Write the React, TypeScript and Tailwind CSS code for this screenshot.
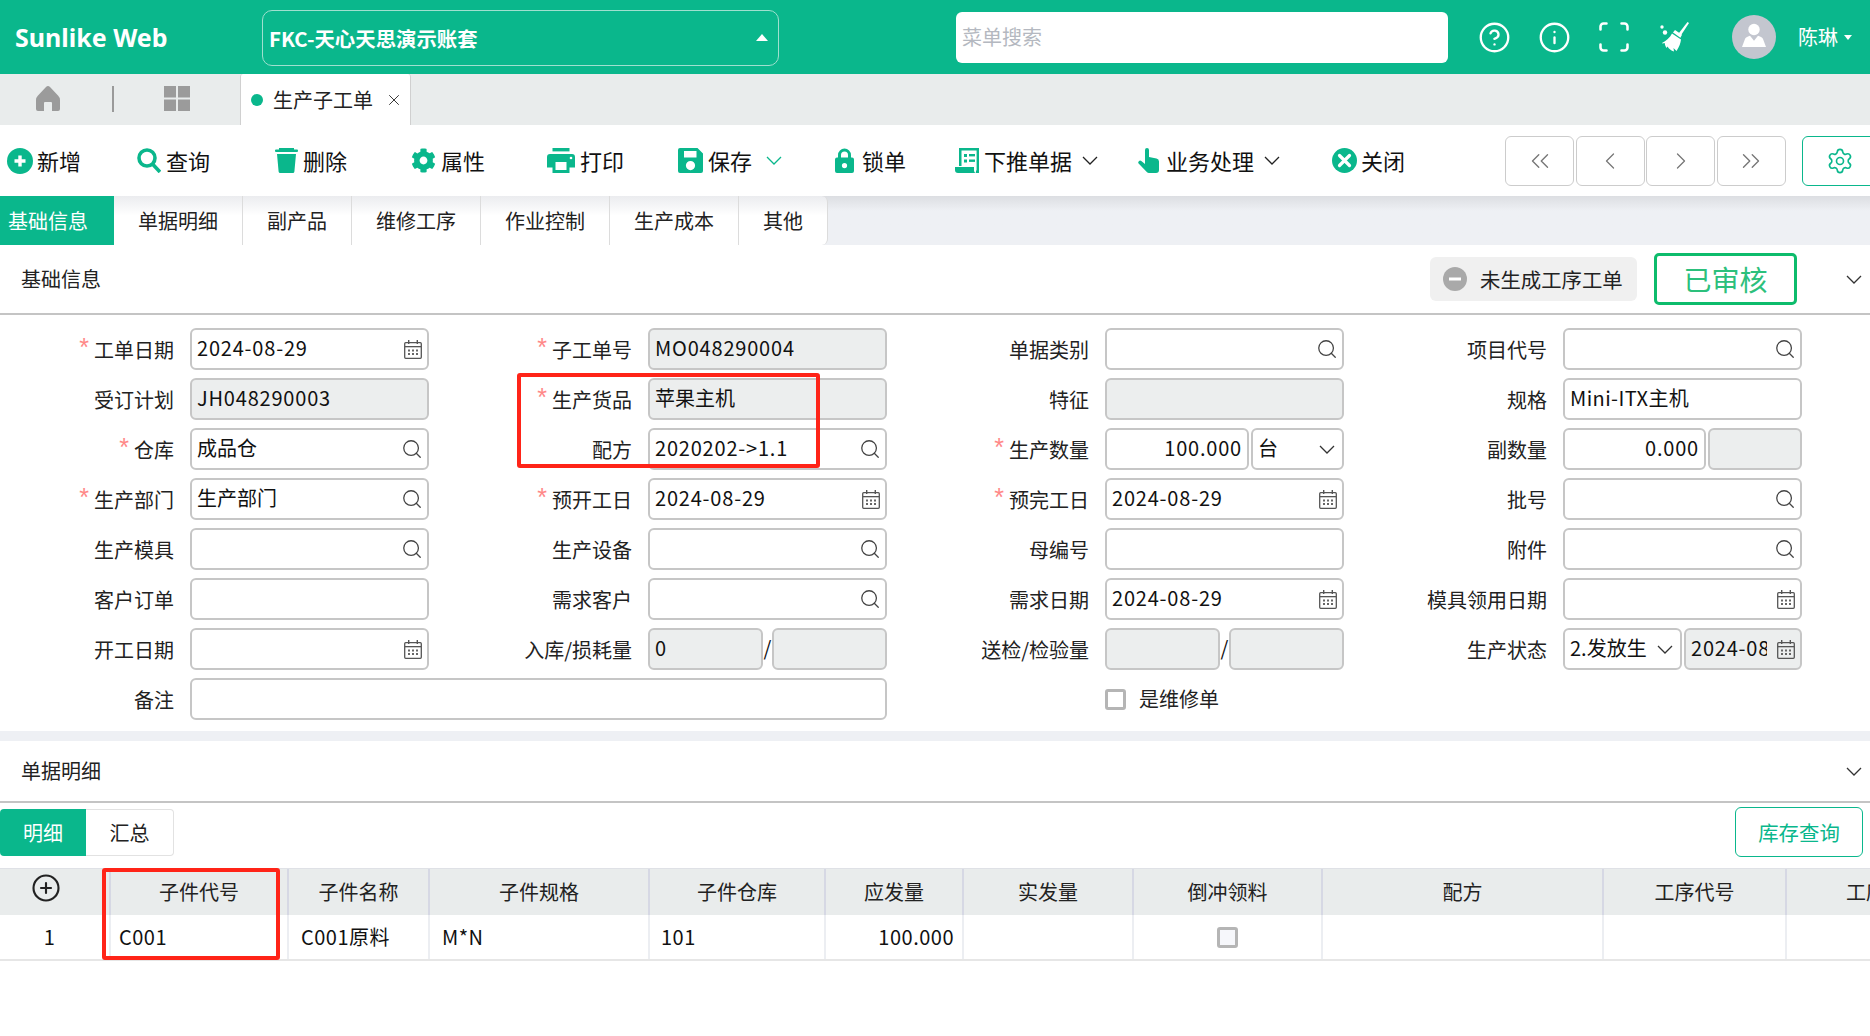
import React from "react";
import { CircleHelp, Info, Scan, Search, Settings, ChevronLeft, ChevronRight, ChevronsLeft, ChevronsRight, CirclePlus, X } from "lucide-react";
import { FaCog } from "react-icons/fa";

const Chev = ({ className = "" }: { className?: string }) => (
  <svg width="16" height="9" viewBox="0 0 16 9" fill="none" stroke="currentColor" strokeWidth="1.3" className={`shrink-0 ${className}`}>
    <polyline points="1,1 8,8 15,1" />
  </svg>
);

const Calendar = () => (
  <svg width="18" height="19" viewBox="0 0 18 19" className="shrink-0">
    <rect x="0.7" y="2.7" width="16.6" height="15.6" rx="1" fill="none" stroke="#555" strokeWidth="1.3" />
    <rect x="1" y="6" width="16" height="1.3" fill="#555" />
    <rect x="4" y="0" width="1.4" height="4" fill="#555" />
    <rect x="12.6" y="0" width="1.4" height="4" fill="#555" />
    {[4, 8, 12].map((x) => [9.5, 13].map((y) => <rect key={`${x}-${y}`} x={x} y={y} width="2" height="2" fill="#666" />))}
  </svg>
);

type InputProps = { value?: string; disabled?: boolean; icon?: "search" | "date" | "chev"; right?: boolean; className?: string; clip?: boolean };
const Input = ({ value = "", disabled, icon, right, className = "", clip }: InputProps) => {
  const ascii = /^[\x00-\x7f]*$/.test(value);
  return (
    <div
      className={`h-[42px] flex items-center pl-[5px] pr-[5px] rounded-[6px] border-2 border-[#c6c6c6] overflow-hidden whitespace-nowrap ${disabled ? "bg-[#eceeee]" : "bg-white"} ${className}`}
    >
      <span className={`flex-1 min-w-0 overflow-hidden -mt-[2px] ${right ? "text-right" : ""} ${ascii ? "tracking-[0.8px]" : ""} ${clip ? "mr-[10px]" : ""}`}>{value}</span>
      {icon === "search" && <Search size={22} strokeWidth={1.4} className="shrink-0 text-[#444] -mr-[1px]" />}
      {icon === "date" && <Calendar />}
      {icon === "chev" && <Chev className="text-[#333] ml-1 mr-[2px]" />}
    </div>
  );
};

const Label = ({ text, req }: { text: string; req?: boolean }) => (
  <div className="h-[42px] flex items-center justify-end pr-[16px] pt-[2px] whitespace-nowrap text-[#222]">
    {req && <span className="text-[#f88] mr-[5px] -mt-[5px] leading-none text-[25px] font-['Liberation_Sans',sans-serif]">*</span>}
    {text}
  </div>
);

const G = "#0ab78c";
const IconPlus = () => (
  <svg width="26" height="26" viewBox="0 0 26 26"><circle cx="13" cy="13" r="13" fill={G} /><path d="M13 7.500v11M7.500 13h11" stroke="#fff" strokeWidth="3.400" /></svg>
);
const IconSearch = () => (
  <svg width="24" height="25" viewBox="0 0 24 25" fill="none" stroke={G} strokeWidth="3.600"><circle cx="10" cy="10" r="8" /><path d="M15.500 16l7.500 8" /></svg>
);
const IconTrash = () => (
  <svg width="23" height="25" viewBox="0 0 23 25" fill={G}>
    <rect x="4" y="0" width="15" height="2" /><rect x="0" y="1.500" width="23" height="2.400" rx="1" /><path d="M2 6h19l-1.600 17.500a1.600 1.600 0 0 1-1.600 1.500H5.200a1.600 1.600 0 0 1-1.600-1.500z" />
  </svg>
);
const IconPrint = () => (
  <svg width="28" height="25" viewBox="0 0 28 25" fill={G}>
    <rect x="5.500" width="17" height="3.400" />
    <path fillRule="evenodd" d="M3 6h22a3 3 0 0 1 3 3v10.500h-5.500V25h-17v-5.500H0V9a3 3 0 0 1 3-3zm5.500 8v8h11v-8z" />
    <circle cx="24" cy="10" r="1.300" fill="#fff" />
  </svg>
);
const IconSave = () => (
  <svg width="25" height="25" viewBox="0 0 25 25" fill={G}>
    <path fillRule="evenodd" d="M2 0h17.500L25 5.500V23a2 2 0 0 1-2 2H2a2 2 0 0 1-2-2V2a2 2 0 0 1 2-2zm4 3v6.500h12.500V3zm6.500 10a4.600 4.600 0 1 0 0 9.200 4.600 4.600 0 0 0 0-9.200z" />
  </svg>
);
const IconLock = () => (
  <svg width="19" height="25" viewBox="0 0 19 25" fill={G}>
    <path d="M3 11V7a6.500 6.500 0 0 1 13 0v4h-3V7a3.500 3.500 0 0 0-7 0v4z" />
    <path fillRule="evenodd" d="M2 9.500h15a2 2 0 0 1 2 2V23a2 2 0 0 1-2 2H2a2 2 0 0 1-2-2V11.500a2 2 0 0 1 2-2zm7.500 5.500a2.600 2.600 0 1 0 0 5.200 2.600 2.600 0 0 0 0-5.200z" />
  </svg>
);
const IconDoc = () => (
  <svg width="24" height="25" viewBox="0 0 24 25" fill={G}>
    <path fillRule="evenodd" d="M4 0h20v25h-3v-2.500h.6V2.600H6.500V18H4z" />
    <rect x="9" y="6" width="3" height="3" /><rect x="14" y="6" width="6" height="2.400" /><rect x="9" y="11.500" width="3" height="3" /><rect x="14" y="11.500" width="6" height="2.400" />
    <path d="M0 19h19v3.500a2.500 2.500 0 0 0 2 2.500H3a3 3 0 0 1-3-3z" />
  </svg>
);
const IconHand = () => (
  <svg width="21" height="25" viewBox="0 0 21 25" fill={G}>
    <path d="M7 2a2 2 0 0 1 4 0v7l7.500 1.600A3 3 0 0 1 21 13.500V22a3 3 0 0 1-3 3h-7a3 3 0 0 1-2.200-1L.6 15.600a1.900 1.900 0 0 1 2.700-2.600L7 16z" />
  </svg>
);
const IconClose = () => (
  <svg width="25" height="25" viewBox="0 0 25 25"><circle cx="12.500" cy="12.500" r="12.500" fill={G} /><path d="M7.500 7.500l10 10M17.500 7.500l-10 10" stroke="#fff" strokeWidth="3.200" strokeLinecap="round" /></svg>
);
const IconBroom = () => (
  <svg width="29" height="30" viewBox="0 0 29 30" fill="#fff">
    <path d="M27.500 0L29 1 20.500 14l-2.500-1.700z" />
    <path d="M13 10.500l2-2.500 7 4.800-1.600 3z" />
    <path d="M12 11.500l9 6c-.5 4-1.500 7-4.500 11.500l-3-3 .5 3.500c-3-.7-5-2.700-6.500-5l-1 1.500c-1-1.500-1.500-3-1.800-5l-2.200.6L2 21C6 19 10 15.500 12 11.500z" />
    <circle cx="2" cy="5" r="1.700" /><circle cx="5" cy="10.500" r="2.200" />
  </svg>
);

const toolbar: { icon: React.ReactNode; text: string; w: string; chev?: boolean; green?: boolean; gap: string; chevMl?: string }[] = [
  { icon: <IconPlus />, text: "新增", w: "w-[130px]", gap: "gap-[4px]" },
  { icon: <IconSearch />, text: "查询", w: "w-[138px]", gap: "gap-[5px]" },
  { icon: <IconTrash />, text: "删除", w: "w-[136px]", gap: "gap-[5px]" },
  { icon: <FaCog size={25} color={G} />, text: "属性", w: "w-[136px]", gap: "gap-[5px]" },
  { icon: <IconPrint />, text: "打印", w: "w-[131px]", gap: "gap-[5px]" },
  { icon: <IconSave />, text: "保存", w: "w-[157px]", chev: true, green: true, gap: "gap-[5px]", chevMl: "ml-[9px]" },
  { icon: <IconLock />, text: "锁单", w: "w-[120px]", gap: "gap-[8px]" },
  { icon: <IconDoc />, text: "下推单据", w: "w-[183px]", chev: true, gap: "gap-[5px]", chevMl: "ml-[5px]" },
  { icon: <IconHand />, text: "业务处理", w: "w-[194px]", chev: true, gap: "gap-[7px]", chevMl: "ml-[3px]" },
  { icon: <IconClose />, text: "关闭", w: "w-[99px]", gap: "gap-[4px]" },
];

const tabs = [
  ["基础信息", "w-[114px]"],
  ["单据明细", "w-[129px]"],
  ["副产品", "w-[109px]"],
  ["维修工序", "w-[129px]"],
  ["作业控制", "w-[129px]"],
  ["生产成本", "w-[129px]"],
  ["其他", "w-[89px]"],
];

const columns = ["", "子件代号", "子件名称", "子件规格", "子件仓库", "应发量", "实发量", "倒冲领料", "配方", "工序代号", "工序名称"];
const gridCols = "grid grid-cols-[109px_178px_141px_220px_176px_138px_170px_189px_281px_183px_200px]";

export default function App() {
  return (
    <div className="relative w-[1870px] h-[1036px] overflow-hidden bg-white text-[20px] leading-[28px] text-[#111] font-['Noto_Sans_CJK_SC','Noto_Sans',sans-serif]">
      {/* top bar */}
      <header className="h-[74px] bg-[#0ab78c] flex items-center text-white">
        <div className="w-[262px] pl-[15px] text-[25px] font-bold whitespace-nowrap font-['Noto_Sans',sans-serif]">Sunlike Web</div>
        <div className="w-[517px] h-[56px] mt-[1px] rounded-[10px] border border-[#9fe0cf] flex items-center justify-between pl-[6px] pr-[10px] font-bold text-[20.4px]">
          <span>FKC-天心天思演示账套</span>
          <span className="w-0 h-0 border-x-[6px] border-x-transparent border-b-[7px] border-b-white" />
        </div>
        <div className="ml-[177px] w-[492px] h-[51px] rounded-[6px] bg-white flex items-center pl-[6px] text-[#b4b8c0]">菜单搜索</div>
        <div className="ml-[16px] flex items-center">
          <div className="w-[60px] flex justify-center"><CircleHelp size={33} strokeWidth={1.7} /></div>
          <div className="w-[60px] flex justify-center"><Info size={33} strokeWidth={1.7} /></div>
          <div className="w-[60px] flex justify-center"><Scan size={36} strokeWidth={1.7} /></div>
          <div className="w-[60px] flex justify-center"><IconBroom /></div>
        </div>
        <div className="ml-[28px] w-[44px] h-[44px] rounded-full bg-[#c3c6cf] flex items-center justify-center">
          <svg width="44" height="44" viewBox="0 0 44 44" fill="#fff">
            <circle cx="22" cy="14.500" r="5.700" />
            <path d="M10 32l3-8c.5-1.500 2-2.500 5-3.300l4 5 4-5c3 .8 4.500 1.800 5 3.300l3 8z" />
          </svg>
        </div>
        <span className="ml-[22px]">陈琳</span>
        <span className="ml-[6px] w-0 h-0 border-x-[4px] border-x-transparent border-t-[5px] border-t-white" />
      </header>

      {/* page tabs */}
      <div className="h-[51px] bg-[#e9ecec] flex items-stretch">
        <div className="w-[96px] flex items-center justify-center">
          <svg width="24" height="25" viewBox="0 0 24 25" fill="#9b9b9b" className="-mt-[2px]">
            <path d="M12 0q1 0 2 1l8 8.500q2 2 2 4.500v9a2 2 0 0 1-2 2h-6v-8a1 1 0 0 0-1-1H9a1 1 0 0 0-1 1v8H2a2 2 0 0 1-2-2v-9q0-2.500 2-4.500L10 1q1-1 2-1z" />
          </svg>
        </div>
        <div className="ml-[16px] mt-[12px] h-[26px] w-[2px] bg-[#9a9a9a]" />
        <div className="w-[126px] flex items-center justify-center">
          <svg width="26" height="25" viewBox="0 0 26 25" fill="#9b9b9b" className="-mt-[2px]">
            <rect width="12" height="11.500" /><rect x="14" width="12" height="11.500" /><rect y="13.500" width="12" height="11.500" /><rect x="14" y="13.500" width="12" height="11.500" />
          </svg>
        </div>
        <div className="w-[171px] bg-white border-x border-[#d0d0d0] rounded-t-[3px] flex items-center pl-[10px]">
          <span className="w-[12px] h-[12px] rounded-full bg-[#0ab78c]" />
          <span className="ml-[10px] text-[#222]">生产子工单</span>
          <X size={18} strokeWidth={1.3} className="ml-[12px] text-[#333]" />
        </div>
      </div>

      {/* toolbar */}
      <div className="h-[71px] bg-white flex items-center pl-[7px]">
        {toolbar.map((t) => (
          <div key={t.text} className={`${t.w} shrink-0 flex items-center ${t.gap}`}>
            {t.icon}
            <span className="text-[#111] text-[22px] -mt-[2px]">{t.text}</span>
            {t.chev && <Chev className={`${t.chevMl} ${t.green ? "text-[#0ab78c]" : "text-[#222]"}`} />}
          </div>
        ))}
        <div className="ml-[74px] flex gap-[1.5px] shrink-0">
          {[ChevronsLeft, ChevronLeft, ChevronRight, ChevronsRight].map((I, i) => (
            <div key={i} className="w-[69px] h-[50px] rounded-[6px] border border-[#cccccc] flex items-center justify-center text-[#777]">
              <I size={i === 0 || i === 3 ? 30 : 28} strokeWidth={1.1} />
            </div>
          ))}
        </div>
        <div className="ml-[16px] w-[76px] h-[50px] shrink-0 rounded-[6px] border border-[#0ab78c] flex items-center justify-center text-[#0ab78c]">
          <Settings size={28} strokeWidth={1.4} />
        </div>
      </div>

      {/* form tabs */}
      <div className="h-[49px] flex bg-linear-to-b from-[#dcdee2] to-[#eef0f4] to-[30%]">
        {tabs.map(([t, w], i) => (
          <div
            key={t}
            className={`${w} flex items-center ${i === 0 ? "bg-[#0ab78c] text-white pl-[8px]" : "justify-center bg-linear-to-b from-[#ebecef] to-white to-[40%] border-r border-[#dcdcdc] text-[#222]"} ${i === 6 ? "rounded-br-[6px] rounded-tr-[6px]" : ""}`}
          >
            {t}
          </div>
        ))}
      </div>

      {/* basic information */}
      <section>
        <div className="h-[70px] border-b-2 border-[#c4c4c4] flex items-center pl-[21px] text-[#222]">
          <span>基础信息</span>
          <div className="ml-auto w-[207px] h-[44px] rounded-[6px] bg-[#f0f0f0] flex items-center pl-[13px]">
            <svg width="24" height="24" viewBox="0 0 24 24"><circle cx="12" cy="12" r="12" fill="#a9a9a9" /><rect x="6" y="10.500" width="12" height="3" fill="#fff" /></svg>
            <span className="ml-[13px] text-[20.4px]">未生成工序工单</span>
          </div>
          <div className="ml-[17px] w-[143px] h-[52px] rounded-[5px] border-[3px] border-[#0dbc6c] flex items-center justify-center text-[28px] text-[#2cc07c]">已审核</div>
          <Chev className="ml-[49px] mr-[8px] text-[#333]" />
        </div>
        <div className="grid grid-cols-[190px_239px_219px_239px_218px_239px_219px_239px] gap-y-[8px] pt-[13px] pb-[11px]">
          <Label text="工单日期" req /><Input value="2024-08-29" icon="date" />
          <Label text="子工单号" req /><Input value="MO048290004" disabled />
          <Label text="单据类别" /><Input icon="search" />
          <Label text="项目代号" /><Input icon="search" />

          <Label text="受订计划" /><Input value="JH048290003" disabled />
          <Label text="生产货品" req /><Input value="苹果主机" disabled />
          <Label text="特征" /><Input disabled />
          <Label text="规格" /><Input value="Mini-ITX主机" className="tracking-[0.4px]" />

          <Label text="仓库" req /><Input value="成品仓" icon="search" />
          <Label text="配方" /><Input value="2020202->1.1" icon="search" />
          <Label text="生产数量" req />
          <div className="flex gap-[2px]"><Input value="100.000" right className="w-[144px]" /><Input value="台" icon="chev" className="w-[93px]" /></div>
          <Label text="副数量" />
          <div className="flex gap-[2px]"><Input value="0.000" right className="w-[143px]" /><Input disabled className="w-[94px]" /></div>

          <Label text="生产部门" req /><Input value="生产部门" icon="search" />
          <Label text="预开工日" req /><Input value="2024-08-29" icon="date" />
          <Label text="预完工日" req /><Input value="2024-08-29" icon="date" />
          <Label text="批号" /><Input icon="search" />

          <Label text="生产模具" /><Input icon="search" />
          <Label text="生产设备" /><Input icon="search" />
          <Label text="母编号" /><Input />
          <Label text="附件" /><Input icon="search" />

          <Label text="客户订单" /><Input />
          <Label text="需求客户" /><Input icon="search" />
          <Label text="需求日期" /><Input value="2024-08-29" icon="date" />
          <Label text="模具领用日期" /><Input icon="date" />

          <Label text="开工日期" /><Input icon="date" />
          <Label text="入库/损耗量" />
          <div className="flex items-center"><Input value="0" disabled className="w-[115px]" /><span className="w-[9px] text-center -mt-[2px]">/</span><Input disabled className="w-[115px]" /></div>
          <Label text="送检/检验量" />
          <div className="flex items-center"><Input disabled className="w-[115px]" /><span className="w-[9px] text-center -mt-[2px]">/</span><Input disabled className="w-[115px]" /></div>
          <Label text="生产状态" />
          <div className="flex gap-[2px]"><Input value="2.发放生" icon="chev" className="w-[119px]" /><Input value="2024-08-29" icon="date" disabled clip className="w-[118px]" /></div>

          <Label text="备注" /><Input className="col-span-3" />
          <div />
          <div className="h-[42px] flex items-center">
            <span className="w-[21px] h-[21px] rounded-[3px] border-[3px] border-[#b5b5b5] bg-white" />
            <span className="ml-[13px] text-[#222]">是维修单</span>
          </div>
        </div>
      </section>

      <div className="h-[10px] bg-[#eef0f4]" />

      {/* detail section */}
      <section>
        <div className="h-[62px] border-b-2 border-[#c4c4c4] flex items-center justify-between pl-[21px] pr-[8px] text-[#222]">
          <span>单据明细</span>
          <Chev className="text-[#333]" />
        </div>
        <div className="h-[65px] flex items-start justify-between pr-[7px]">
          <div className="mt-[6px] flex h-[47px]">
            <div className="w-[86px] bg-[#0ab78c] text-white flex items-center justify-center rounded-l-[4px]">明细</div>
            <div className="w-[88px] border border-l-0 border-[#e2e2e2] rounded-r-[4px] flex items-center justify-center text-[#222]">汇总</div>
          </div>
          <div className="mt-[4px] w-[128px] h-[50px] rounded-[6px] border-[1.5px] border-[#0ab78c] text-[#0ab78c] flex items-center justify-center text-[20.4px]">库存查询</div>
        </div>
        <div className={`${gridCols} h-[47px] bg-[#e9ecec] text-[#222] border-t border-[#dfe1e6]`}>
          {columns.map((c, i) => (
            <div key={i} className={`flex items-center justify-center whitespace-nowrap ${i > 0 ? "border-l-2 border-[#d6d8e4]" : ""}`}>
              {i === 0 ? <CirclePlus size={30} strokeWidth={1.7} className="text-[#222] -mt-[8px] -ml-[17px]" /> : c}
            </div>
          ))}
        </div>
        <div className={`${gridCols} h-[46px] border-b-2 border-[#e6e6e6] tracking-[0.5px]`}>
          <div className="flex items-center justify-center pr-[10px]">1</div>
          <div className="flex items-center pl-[8px] border-l-2 border-[#eceef2]">C001</div>
          <div className="flex items-center pl-[12px] border-l-2 border-[#eceef2]">C001原料</div>
          <div className="flex items-center pl-[12px] border-l-2 border-[#eceef2]">M*N</div>
          <div className="flex items-center pl-[11px] border-l-2 border-[#eceef2]">101</div>
          <div className="flex items-center justify-end pr-[8px] border-l-2 border-[#eceef2]">100.000</div>
          <div className="border-l-2 border-[#eceef2]" />
          <div className="flex items-center justify-center border-l-2 border-[#eceef2]">
            <span className="w-[21px] h-[21px] rounded-[3px] border-[3px] border-[#b5b5b5] bg-[#f6f7fb]" />
          </div>
          <div className="border-l-2 border-[#eceef2]" />
          <div className="border-l-2 border-[#eceef2]" />
          <div className="border-l-2 border-[#eceef2]" />
        </div>
      </section>

      {/* annotation boxes drawn over the form */}
      <div className="absolute left-[517px] top-[373px] w-[303px] h-[95px] border-[4px] border-[#ff2418] rounded-[3px]" />
      <div className="absolute left-[102px] top-[868px] w-[178px] h-[92px] border-[4px] border-[#ff2418] rounded-[3px]" />
    </div>
  );
}
